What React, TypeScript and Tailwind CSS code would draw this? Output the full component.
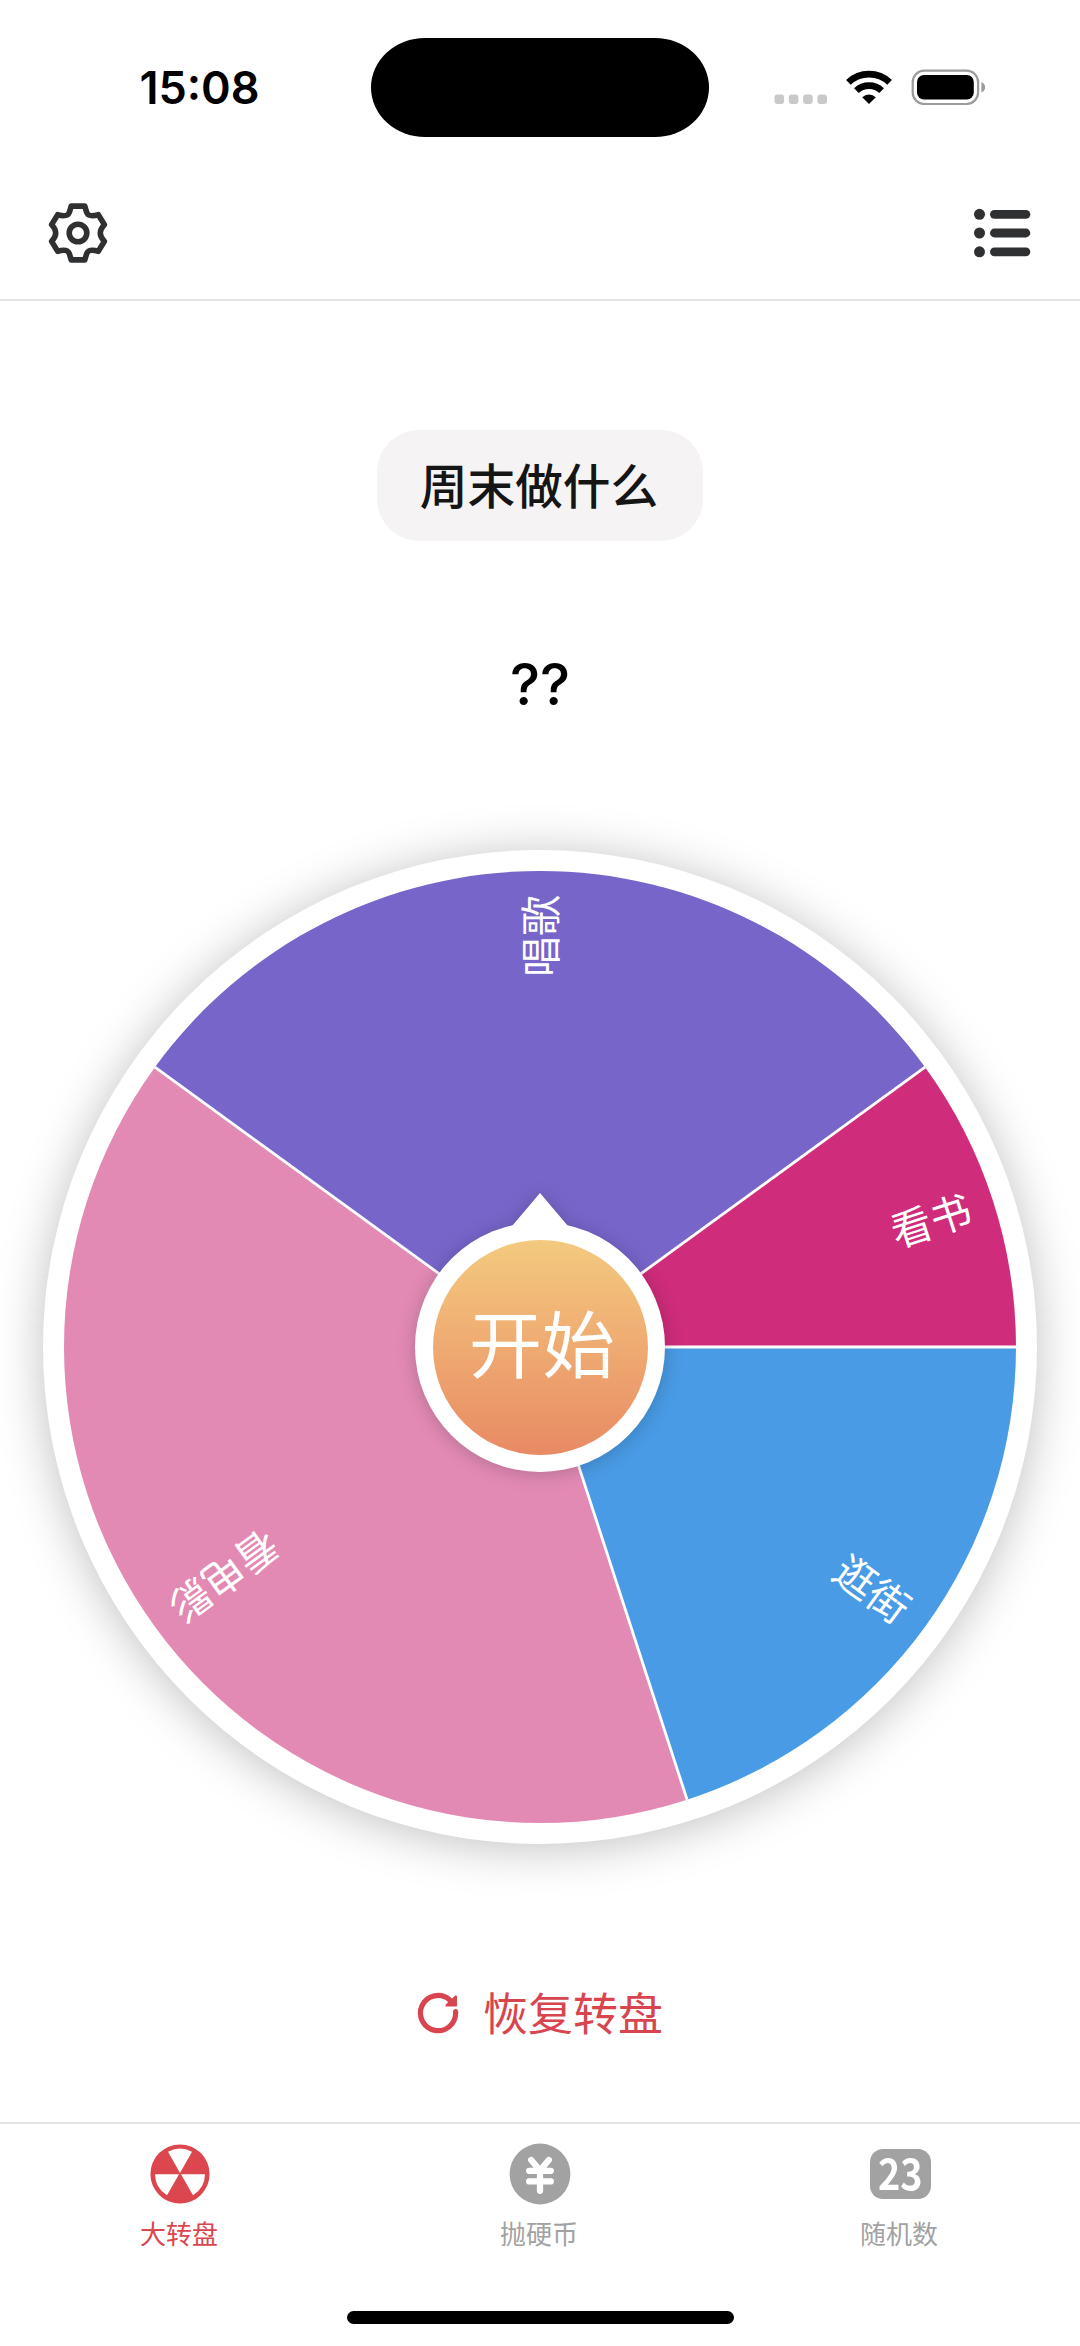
import React, { useState } from "react";

type Slice = {
  label: string;
  weight: number;
  color: string;
};

const SLICES: Slice[] = [
  { label: "逛街", weight: 2, color: "#499be5" },
  { label: "看电影", weight: 4, color: "#e28ab4" },
  { label: "唱歌", weight: 3, color: "#7765c9" },
  { label: "看书", weight: 1, color: "#cf2c7b" },
];

const RADIUS = 476;

const point = (deg: number) => {
  const rad = (deg * Math.PI) / 180;
  return `${(RADIUS * Math.cos(rad)).toFixed(2)} ${(RADIUS * Math.sin(rad)).toFixed(2)}`;
};

function StatusBar() {
  return (
    <div className="h-[165px] pt-[9px] flex items-center">
      <div className="w-[371px] pl-[28px] pt-px text-center font-['Inter',sans-serif] font-semibold text-[45px] leading-none">
        15:08
      </div>
      <div className="w-[338px] h-[99px] bg-black rounded-[54px/49.5px]" />
      <div className="flex-1 flex items-center pl-[65px]">
        <svg width="214" height="36" viewBox="774 69 214 36">
          <g fill="#c9c9c9">
            <rect x="774.5" y="94.5" width="9.6" height="9.6" rx="3" />
            <rect x="788.8" y="94.5" width="9.6" height="9.6" rx="3" />
            <rect x="803.1" y="94.5" width="9.6" height="9.6" rx="3" />
            <rect x="817.4" y="94.5" width="9.6" height="9.6" rx="3" />
          </g>
          <g fill="none" stroke="#000" strokeWidth="6.8">
            <path d="M848.4 82.4A30 30 0 0 1 889.6 82.4" />
            <path d="M856.4 90.6A18.3 18.3 0 0 1 881.6 90.6" />
          </g>
          <path d="M862.2 97.2A10 10 0 0 1 875.8 97.2L869 104z" />
          <rect x="912.7" y="70.6" width="65.4" height="33.4" rx="11.5" fill="none" stroke="#9c9c9c" strokeWidth="2.2" />
          <rect x="917" y="75" width="56.8" height="24.6" rx="7" />
          <path d="M981.4 82c5 2 5 8.4 0 10.4z" fill="#9c9c9c" />
        </svg>
      </div>
    </div>
  );
}

function GearIcon() {
  return (
    <svg width="62" height="62" viewBox="-31 -31 62 62" fill="none" stroke="#2e3032" strokeWidth="5.6" strokeLinejoin="round">
      <path d="M-6.8-26.9H6.8L8.6-20.8C10.2-16.8 13.5-16.4 20.3-18.3L26.4-8.4C20.9-2.6 20.9 2.6 26.4 8.4L20.3 18.3C13.5 16.4 10.2 16.8 8.6 20.8L6.8 26.9H-6.8L-8.6 20.8C-10.2 16.8-13.5 16.4-20.3 18.3L-26.4 8.4C-20.9 2.6-20.9-2.6-26.4-8.4L-20.3-18.3C-13.5-16.4-10.2-16.8-8.6-20.8Z" />
      <circle r="8.8" />
    </svg>
  );
}

function ListIcon() {
  return (
    <svg width="58" height="50" viewBox="0 0 58 50" fill="#2e3032">
      {[6.3, 25, 43.8].map((y) => (
        <g key={y}>
          <circle cx="6.5" cy={y} r="5.5" />
          <rect x="17" y={y - 4.4} width="40.3" height="8.8" rx="4.4" />
        </g>
      ))}
    </svg>
  );
}

function Wheel({ onStart }: { onStart: () => void }) {
  const total = SLICES.reduce((sum, s) => sum + s.weight, 0);
  let start = 0;

  return (
    <div className="relative mt-[137px] size-[994px] shrink-0 rounded-full bg-white flex items-center justify-center shadow-[0_4px_48px_rgba(0,0,0,0.25)]">
      <svg width="956" height="956" viewBox="-478 -478 956 956">
        {SLICES.map((slice) => {
          const from = start;
          const to = from + (slice.weight / total) * 360;
          start = to;
          return (
            <g key={slice.label}>
              <path
                d={`M0 0L${point(from)}A${RADIUS} ${RADIUS} 0 ${to - from > 180 ? 1 : 0} 1 ${point(to)}Z`}
                fill={slice.color}
              />
              <text
                x="452"
                y="16"
                textAnchor="end"
                transform={`rotate(${(from + to) / 2})`}
                fill="#fff"
                className="font-['Noto_Sans_CJK_SC',sans-serif] text-[41px]"
              >
                {slice.label}
              </text>
            </g>
          );
        })}
        {SLICES.map((slice) => {
          start += (slice.weight / total) * 360;
          return <path key={slice.label} d={`M0 0L${point(start)}`} stroke="#fff" strokeWidth="2.8" />;
        })}
      </svg>

      {/* start button sits over the middle of the wheel */}
      <button
        onClick={onStart}
        className="absolute size-[250px] rounded-full flex items-center justify-center drop-shadow-[0_2px_9px_rgba(0,0,0,0.2)]"
      >
        <svg className="absolute left-0 -top-[29px]" width="250" height="279" viewBox="0 0 250 279" fill="#fff">
          <path d="M125 0L164 46H86z" />
          <circle cx="125" cy="154" r="125" />
        </svg>
        <span className="relative size-[215px] rounded-full bg-gradient-to-b from-[#f3ca7f] to-[#e88a64] flex items-center justify-center pl-[4px] pb-[13px] text-white font-['Noto_Sans_CJK_SC',sans-serif] text-[73px] leading-none">
          开始
        </span>
      </button>
    </div>
  );
}

function WheelTabIcon() {
  return (
    <svg width="62" height="62" viewBox="-31 -31 62 62">
      <circle r="29.6" fill="#dc464e" />
      <g fill="#fff">
        <path d="M0-1L-12-22.2A25 25 0 0 1 12-22.2Z" />
        <path d="M1 0.3H25A25 25 0 0 1 13 21.3Z" />
        <path d="M-1 0.3H-25A25 25 0 0 0 -13 21.3Z" />
      </g>
    </svg>
  );
}

function CoinTabIcon() {
  return (
    <svg width="62" height="62" viewBox="-31 -31 62 62">
      <circle r="30.4" fill="#a2a2a2" />
      <path
        d="M-8.8-14L0-3.5 8.8-14M-10.8-3.2H10.8M-10.8 7.4H10.8M0-3V16.8"
        fill="none"
        stroke="#fff"
        strokeWidth="6.3"
        strokeLinecap="round"
        strokeLinejoin="round"
      />
    </svg>
  );
}

function NumberTabIcon() {
  return (
    <div className="h-[62px] flex items-center">
      <div className="w-[61px] h-[50px] rounded-[13px] bg-[#a2a2a2] text-white flex items-center justify-center pb-[5px] font-['Noto_Sans_CJK_SC',sans-serif] font-bold text-[43px] leading-none">
        <span className="scale-x-[0.88]">23</span>
      </div>
    </div>
  );
}

const TABS = [
  { label: "大转盘", icon: <WheelTabIcon /> },
  { label: "抛硬币", icon: <CoinTabIcon /> },
  { label: "随机数", icon: <NumberTabIcon /> },
];

export default function App() {
  const [result, setResult] = useState<string>("??");

  const spin = () => {
    const pool = SLICES.flatMap((s) => Array(s.weight).fill(s.label));
    setResult(pool[Math.floor(Math.random() * pool.length)]);
  };

  return (
    <div className="w-[1080px] h-[2346px] overflow-hidden flex flex-col bg-white text-black font-['Noto_Sans_CJK_SC',sans-serif]">
      <StatusBar />

      <header className="h-[136px] pt-[2px] border-b-2 border-[#e3e3e3] flex items-center justify-between pl-[47px] pr-[49px]">
        <GearIcon />
        <ListIcon />
      </header>

      <main className="flex-1 flex flex-col items-center pt-[129px]">
        <button className="w-[326px] h-[111px] pb-[3px] pr-[2px] rounded-[42px] bg-[#f5f3f4] text-[#151515] text-[47.7px] font-medium leading-none flex items-center justify-center">
          周末做什么
        </button>
        <p className="mt-[115px] h-[57px] font-['Inter','Noto_Sans_CJK_SC',sans-serif] font-medium text-[57px] leading-none">
          {result}
        </p>

        <Wheel onStart={spin} />

        <button
          onClick={() => setResult("??")}
          className="mt-[146px] h-[46px] flex items-center gap-[24px] text-[#d8454e] text-[45px] leading-none"
        >
          <svg width="42" height="42" viewBox="-21 -21 42 42">
            <path d="M17.6 -1.3A17.6 17.6 0 1 1 11.5 -13.3" fill="none" stroke="currentColor" strokeWidth="5.2" strokeLinecap="round" />
            <path d="M17.8-16.5V-7.6H8.6Z" fill="currentColor" stroke="currentColor" strokeWidth="2.4" strokeLinejoin="round" />
          </svg>
          <span className="pb-[3px]">恢复转盘</span>
        </button>
      </main>

      <nav className="h-[224px] border-t-2 border-[#e3e3e3] flex flex-col items-center">
        <div className="w-full flex pt-[19px]">
          {TABS.map((tab, i) => (
            <div
              key={tab.label}
              className={`flex-1 flex flex-col items-center gap-[15px] text-[26px] leading-none ${i === 0 ? "text-[#dc464e]" : "text-[#a2a2a2]"}`}
            >
              {tab.icon}
              <span className="pr-[2px]">{tab.label}</span>
            </div>
          ))}
        </div>
        <div className="mt-auto mb-[22px] w-[387px] h-[13px] rounded-full bg-black" />
      </nav>
    </div>
  );
}
